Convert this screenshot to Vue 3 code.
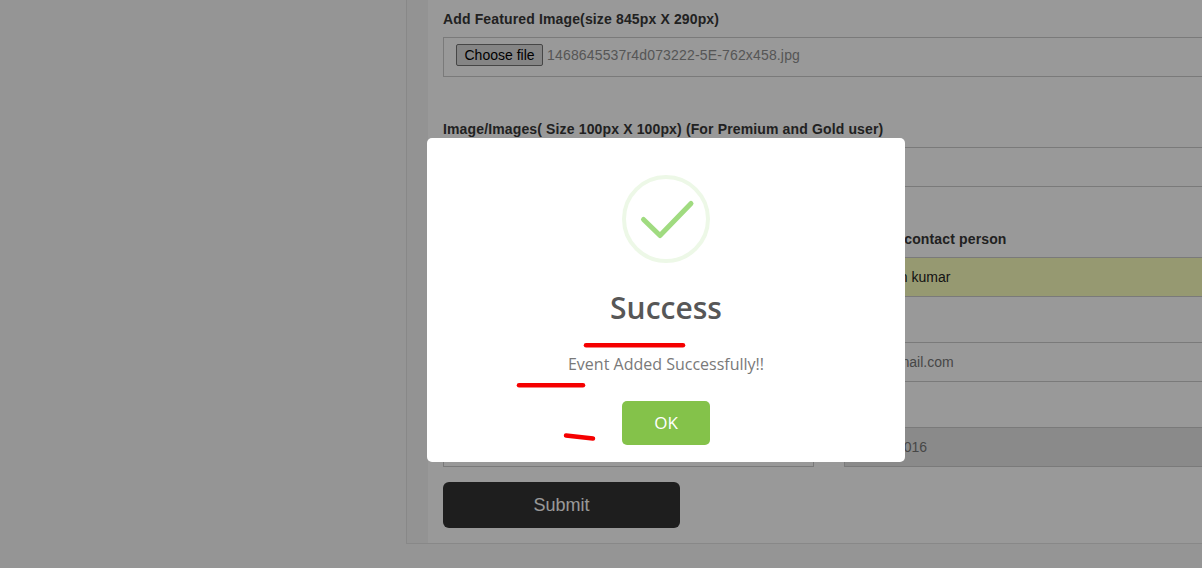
<template>
  <div class="page">
    <div class="panel">
      <form class="event-form" @submit.prevent>
        <div class="field">
          <label class="field-label">Add Featured Image(size 845px X 290px)</label>
          <div class="input-box file-box">
            <span class="file-btn">Choose file</span>
            <span class="file-name">1468645537r4d073222-5E-762x458.jpg</span>
          </div>
        </div>

        <div class="field field-images">
          <label class="field-label">Image/Images( Size 100px X 100px) (For Premium and Gold user)</label>
          <div class="input-box"></div>
        </div>

        <div class="two-cols">
          <div v-for="item in fields" :key="item.label" class="field">
            <label class="field-label">{{ item.label }}</label>
            <div class="input-box text-box" :class="item.kind">{{ item.value }}</div>
          </div>
        </div>

        <button class="submit-btn" type="submit">Submit</button>
      </form>
    </div>

    <div class="overlay">
      <div class="modal">
        <svg class="success-icon" width="88" height="88" viewBox="0 0 88 88">
          <circle cx="44" cy="44" r="42" fill="none" stroke="#edf8e7" stroke-width="4" />
          <path d="M21.5 44.5 L38 60.5 L69 28.5" fill="none" stroke="#a0db80" stroke-width="5" stroke-linecap="round" stroke-linejoin="round" />
        </svg>
        <h2 class="modal-title">Success</h2>
        <p class="modal-text">Event Added Successfully!!</p>
        <button class="ok-btn" type="button">OK</button>
      </div>

      <!-- red marks drawn over the dialog -->
      <svg class="scribbles" width="1202" height="568" viewBox="0 0 1202 568">
        <path v-for="line in scribbles" :key="line" :d="line" fill="none" stroke="#f50000" stroke-width="4.5" stroke-linecap="round" />
      </svg>
    </div>
  </div>
</template>

<script setup>
const fields = [
  { label: 'Contact number', value: '', kind: '' },
  { label: 'Name of contact person', value: 'Madhan kumar', kind: 'autofill' },
  { label: 'Website', value: '', kind: '' },
  { label: 'Email', value: 'mk@gmail.com', kind: '' },
  { label: 'Start date', value: '', kind: '' },
  { label: 'End date', value: '07/16/2016', kind: 'disabled' }
]

const scribbles = [
  'M586 345.3 L683 345.3',
  'M519 385.3 L583 385.3',
  'M566 435.4 L593 438.6'
]
</script>

<style>
html,
body {
  margin: 0;
  height: 100%;
  overflow: hidden;
}
</style>

<style scoped>
.page {
  position: relative;
  width: 1202px;
  height: 568px;
  overflow: hidden;
  background: #f8f8f8;
  font-family: "Liberation Sans", Arial, sans-serif;
}

.panel {
  width: 830px;
  height: 544px;
  margin-left: 406px;
  padding-left: 21px;
  box-sizing: border-box;
  background: #f5f5f5;
  border-left: 1px solid #e3e3e3;
  border-bottom: 1px solid #e3e3e3;
}

.event-form {
  height: 100%;
  box-sizing: border-box;
  padding: 12px 0 0 15px;
  background: #fff;
}

.field {
  width: 772px;
}

.field-images {
  margin-top: 45px;
}

.field-label {
  display: block;
  height: 25px;
  font-size: 14px;
  line-height: 15px;
  font-weight: 700;
  letter-spacing: 0.14px;
  color: #383838;
  white-space: nowrap;
}

.input-box {
  height: 40px;
  box-sizing: border-box;
  border: 1px solid #ccc;
  background: #fff;
}

.file-box {
  display: flex;
  align-items: center;
  padding: 0 0 4px 12px;
}

.file-btn {
  box-sizing: border-box;
  height: 22px;
  padding: 0 7.5px;
  line-height: 20px;
  font-size: 14px;
  color: #000;
  background: #dedede;
  border: 1px solid #767676;
  border-radius: 2px;
}

.file-name {
  margin-left: 4px;
  font-size: 14px;
  letter-spacing: 0.16px;
  color: #8f8f8f;
}

.two-cols {
  display: grid;
  grid-template-columns: 371px 371px;
  column-gap: 30px;
  row-gap: 20px;
  width: 772px;
  margin-top: 45px;
}

.two-cols .field {
  width: auto;
}

.text-box {
  padding-left: 12px;
  line-height: 38px;
  font-size: 14px;
  color: #777;
}

.autofill {
  color: #222;
  background: #faffbd;
}

.disabled {
  background: #e6e6e6;
}

.submit-btn {
  display: block;
  width: 237px;
  height: 46px;
  margin-top: 15px;
  padding: 0;
  border: 0;
  border-radius: 6px;
  background: #323232;
  color: #fff;
  font-family: inherit;
  font-size: 18px;
}

.overlay {
  position: absolute;
  inset: 0;
  background: rgba(0, 0, 0, 0.4);
}

.modal {
  position: absolute;
  left: 427px;
  top: 138px;
  width: 478px;
  height: 324px;
  box-sizing: border-box;
  padding-top: 37px;
  display: flex;
  flex-direction: column;
  align-items: center;
  background: #fff;
  border-radius: 5px;
  font-family: "Open Sans", sans-serif;
}

.success-icon {
  flex-shrink: 0;
}

.modal-title {
  margin: 25px 0 0;
  font-size: 30px;
  line-height: 40px;
  font-weight: 600;
  color: #575757;
}

.modal-text {
  margin: 25px 0 0;
  font-size: 16px;
  line-height: 22px;
  color: #797979;
}

.ok-btn {
  width: 88px;
  height: 44px;
  margin-top: 26px;
  padding: 0 0 2px;
  border: 0;
  border-radius: 5px;
  background: #84c24a;
  color: #fff;
  font-family: inherit;
  font-size: 17px;
  font-weight: 500;
}

.scribbles {
  position: absolute;
  left: 0;
  top: 0;
  pointer-events: none;
}
</style>
